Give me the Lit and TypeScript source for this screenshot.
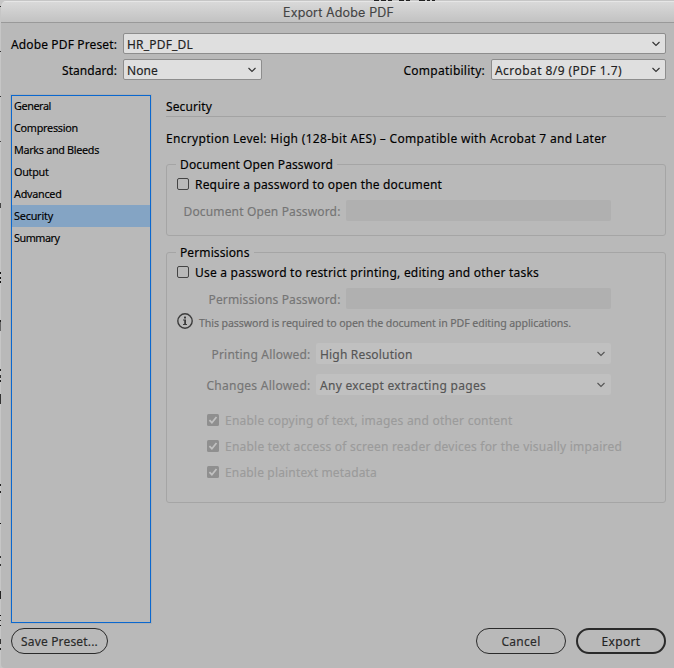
import { LitElement, html, css } from "lit";
import { customElement, property } from "lit/decorators.js";
import { classMap } from "lit/directives/class-map.js";

const FAMILY = '"Noto Sans", "Open Sans", sans-serif';
const pen = document.createElement("canvas").getContext("2d")!;

/** A single line of interface text, tracked to occupy a given width. */
@customElement("ui-text")
class UiText extends LitElement {
  @property() text = "";
  @property({ type: Number }) width = 0;
  @property({ type: Number }) size = 12;
  @property() family = FAMILY;
  static styles = css`
    :host { display: inline-block; flex: none; line-height: 16px; -webkit-text-stroke: 0.15px currentColor; }
    .line { display: block; white-space: pre; }
  `;
  render() {
    pen.font = `${this.size}px ${this.family}`;
    const natural = pen.measureText(this.text).width;
    const track = (this.width - natural) / this.text.length;
    return html`<span class="line" style="font:${this.size}px/16px ${this.family};letter-spacing:${track}px;width:${this.width}px">${this.text}</span>`;
  }
}

const t = (text: string, width: number, size = 12) =>
  html`<ui-text .text=${text} .width=${width} .size=${size}></ui-text>`;

const chevron = html`<svg class="chev" width="10" height="6" viewBox="0 0 10 6">
  <path d="M1.5 1 L5 4.4 L8.5 1" fill="none" stroke="currentColor" stroke-width="1.15" /></svg>`;

const check = html`<svg class="tick" width="12" height="12" viewBox="0 0 12 12">
  <rect width="12" height="12" rx="1.5" fill="#8f8f8f" />
  <path d="M2.4 6.2 L4.9 8.7 L9.5 3" fill="none" stroke="#c1c1c1" stroke-width="1.8" /></svg>`;

const info = html`<svg class="info" width="16" height="16" viewBox="0 0 16 16">
  <circle cx="8" cy="8" r="7.2" fill="none" stroke="#3c3c3c" stroke-width="1.4" />
  <path d="M6 6.5h3v4.5h1v1H6v-1h1.2V7.5H6z" fill="#3c3c3c" />
  <rect x="7" y="3.6" width="2" height="1.9" rx=".5" fill="#3c3c3c" /></svg>`;

const pages: [string, number][] = [
  ["General", 37], ["Compression", 64], ["Marks and Bleeds", 85], ["Output", 34.5],
  ["Advanced", 47.5], ["Security", 39], ["Summary", 45.5],
];

/** Document lines peeking out behind the dialog: [offset, length, shade]. */
const leftMarks: [number, number, string][] = [
  [6, 1, "#333"], [51, 1, "#333"], [96, 1, "#333"], [141, 1, "#444"], [203, 5, "#444"],
  [272, 2, "#111"], [277, 2, "#111"], [281, 2, "#111"], [320, 2, "#222"], [322, 9, "#666"],
  [369, 2, "#222"], [375, 3, "#333"], [380, 2, "#222"], [394, 10, "#333"], [484, 2, "#222"],
  [491, 2, "#222"], [523, 1, "#111"], [556, 2, "#333"], [564, 2, "#333"], [591, 8, "#222"],
  [615, 1, "#111"], [620, 1, "#333"], [625, 1, "#111"], [639, 5, "#333"], [648, 2, "#222"],
];
const topMarks: [number, number][] = [
  [374, 5], [381, 5], [388, 4], [399, 5], [406, 4], [419, 6], [427, 3], [432, 3],
];

@customElement("app-root")
class AppRoot extends LitElement {
  static styles = css`
    :host { display: block; position: relative; width: 674px; height: 668px; overflow: hidden;
      background: #c6c6c6; color: #000; }
    * { box-sizing: border-box; }
    svg { display: block; flex: none; }
    .window { margin: 1px 0 0 1px; width: 673px; height: 667px; display: flex; flex-direction: column;
      background: #b9b9b9; border-radius: 5px 0 0 4px; overflow: hidden; }
    .titlebar { height: 22px; border-top: 1px solid #e6e6e6; border-bottom: 1px solid #999;
      background: linear-gradient(#d9d9d9, #c2c2c2); color: #444; padding: 1px 0 0 282px; }
    .top { padding: 10px 8px 0 0; display: flex; flex-direction: column; gap: 5px; height: 72px; }
    .row { display: flex; align-items: center; height: 21px; }
    .label { display: flex; justify-content: flex-end; width: 116px; margin-right: 6px; padding-top: 2px; }
    .label.mid { width: 223px; }
    .select { display: flex; align-items: center; justify-content: space-between; height: 21px;
      background: #dfdfdf; border: 1px solid #8d8d8d; border-radius: 2px; padding: 2px 4px 0 3px; color: #222; }
    .chev { margin-top: -1px; color: #333; }
    .grow { flex: 1; }
    .std { width: 139px; }
    .compat { width: 175px; }
    .body { display: flex; height: 528px; padding: 0 8px 0 10px; gap: 15px; }
    .list { width: 140px; border: 1px solid #0a68cf; outline: 1px solid #aeb0b3; }
    .item { height: 22px; padding: 1px 0 0 2px; }
    .item:first-child { height: 21px; padding-top: 0; }
    .item.on { background: #84a4c4; }
    .panel { width: 500px; display: flex; flex-direction: column; }
    .head { height: 22px; padding-top: 2px; border-bottom: 1px solid #a3a3a3; }
    .enc { padding-top: 12px; height: 39px; }
    .group { display: flex; flex-direction: column; position: relative; width: 500px;
      border: 1px solid #a5a5a5; border-radius: 3px; margin-top: 8px; }
    .legend { position: absolute; top: -10px; left: 9px; padding: 0 4px; background: #b9b9b9; height: 17px; }
    .g1 { height: 72px; }
    .g2 { height: 251px; margin-top: 16px; }
    .check { display: flex; align-items: center; gap: 6px; margin-left: 10px; height: 16px; margin-top: 11px; }
    .check ui-text { margin-top: 2px; }
    .box { width: 12px; height: 12px; border: 1px solid #444; border-radius: 2px; }
    .field { display: flex; align-items: center; height: 21px; margin-top: 8px; }
    .field .lab { display: flex; justify-content: flex-end; color: #757575; width: 173.5px; margin-right: 5.5px; padding-top: 2px; }
    .field.drop { margin-top: 10px; }
    .field.first { margin-top: 14px; }
    .field.drop .lab { width: 143.5px; }
    .input { width: 265px; height: 21px; border-radius: 2px; background: #b0b0b0; }
    .drop .select { width: 295px; border: 0; background: #c0c0c0; color: #555; padding: 2px 5px 0 4px; }
    .drop .chev { color: #555; }
    .note { display: flex; gap: 6px; margin: 4px 0 0 10px; height: 16px; color: #6a6a6a; }
    .note ui-text { margin-top: 2px; }
    .opts { display: flex; flex-direction: column; gap: 10px; margin: 17px 0 0 40px; color: #9b9b9b; }
    .opt { display: flex; align-items: center; gap: 6px; height: 16px; }
    .opt ui-text { margin-top: 1px; }
    .footer { display: flex; height: 27px; padding: 0 8px 0 10px; margin-top: 5px; color: #2a2a2a; }
    .btn { height: 26px; border: 1px solid #2a2a2a; border-radius: 13px; display: flex; align-items: center;
      justify-content: center; padding-top: 1px; width: 90px; }
    .save { width: 97px; margin-right: auto; }
    .ok { border-width: 2px; margin-left: 10px; color: #222; }
    .mark { position: absolute; }
  `;
  render() {
    return html`
      <div class="window">
        <div class="titlebar"><ui-text .text=${"Export Adobe PDF"} .width=${111} .size=${12.5} .family=${'Inter, Roboto, sans-serif'}></ui-text></div>
        <div class="top">
          <div class="row"><div class="label">${t("Adobe PDF Preset:", 106)}</div>
            <div class="select grow">${t("HR_PDF_DL", 66)}${chevron}</div></div>
          <div class="row"><div class="label">${t("Standard:", 55)}</div>
            <div class="select std">${t("None", 31)}${chevron}</div>
            <div class="label mid">${t("Compatibility:", 81.5)}</div>
            <div class="select compat">${t("Acrobat 8/9 (PDF 1.7)", 127)}${chevron}</div></div>
        </div>
        <div class="body">
          <div class="list">
            ${pages.map(([name, w]) => html`<div class=${classMap({ item: true, on: name === "Security" })}>${t(name, w, 10.8)}</div>`)}
          </div>
          <div class="panel">
            <div class="head">${t("Security", 46)}</div>
            <div class="enc">${t("Encryption Level: High (128-bit AES) – Compatible with Acrobat 7 and Later", 440.5)}</div>
            <div class="group g1">
              <div class="legend">${t("Document Open Password", 153)}</div>
              <div class="check"><span class="box"></span>${t("Require a password to open the document", 247)}</div>
              <div class="field"><div class="lab">${t("Document Open Password:", 157)}</div><div class="input"></div></div>
            </div>
            <div class="group g2">
              <div class="legend">${t("Permissions", 69.5)}</div>
              <div class="check"><span class="box"></span>${t("Use a password to restrict printing, editing and other tasks", 344)}</div>
              <div class="field"><div class="lab">${t("Permissions Password:", 132)}</div><div class="input"></div></div>
              <div class="note">${info}${t("This password is required to open the document in PDF editing applications.", 372, 10.6)}</div>
              <div class="field drop first"><div class="lab">${t("Printing Allowed:", 99)}</div>
                <div class="select">${t("High Resolution", 92.5)}${chevron}</div></div>
              <div class="field drop"><div class="lab">${t("Changes Allowed:", 104)}</div>
                <div class="select">${t("Any except extracting pages", 166)}${chevron}</div></div>
              <div class="opts">
                <div class="opt">${check}${t("Enable copying of text, images and other content", 287.5)}</div>
                <div class="opt">${check}${t("Enable text access of screen reader devices for the visually impaired", 397)}</div>
                <div class="opt">${check}${t("Enable plaintext metadata", 152)}</div>
              </div>
            </div>
          </div>
        </div>
        <div class="footer">
          <div class="btn save">${t("Save Preset...", 77)}</div>
          <div class="btn">${t("Cancel", 39)}</div>
          <div class="btn ok">${t("Export", 39)}</div>
        </div>
      </div>
      ${leftMarks.map(([y, h, c]) => html`<i class="mark" style="left:0;width:1px;top:${y}px;height:${h}px;background:${c}"></i>`)}
      ${topMarks.map(([x, w]) => html`<i class="mark" style="top:0;height:1px;left:${x}px;width:${w}px;background:#222"></i>`)}
    `;
  }
}
